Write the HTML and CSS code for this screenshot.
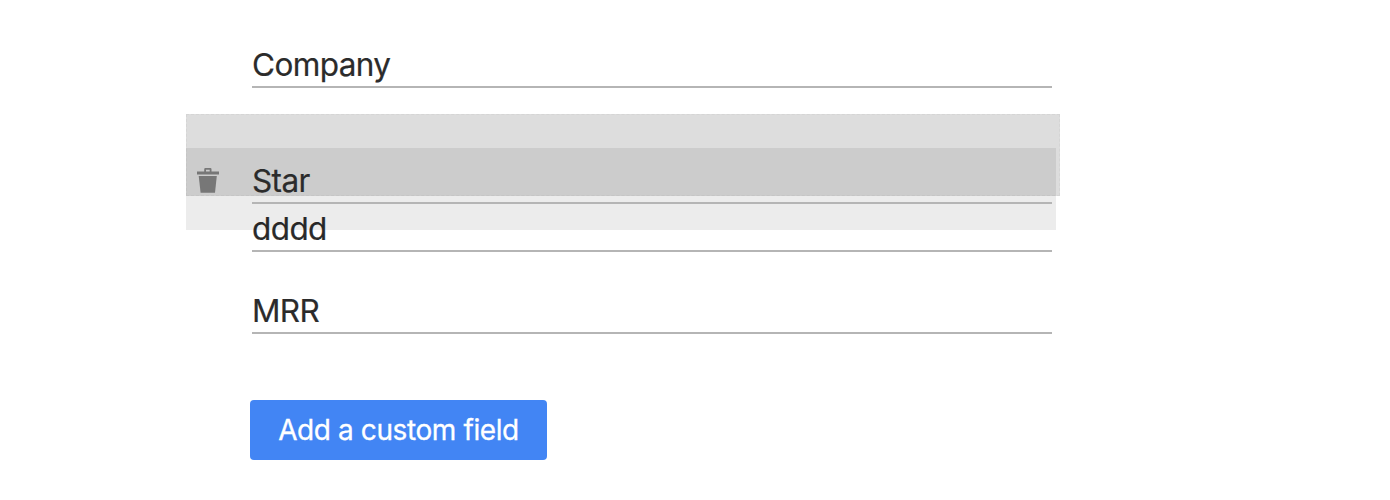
FILE: index.html
```html
<!DOCTYPE html>
<html lang="en">
<head>
  <meta charset="UTF-8" />
  <meta name="viewport" content="width=device-width, initial-scale=1.0"/>
  <title>Custom fields</title>
  <link rel="stylesheet" href="styles.css">
</head>
<body>

  <main class="custom-fields">
    <div class="field-row">
      <div class="field">Company</div>
    </div>

    <!-- Drop target, with the dragged row floating over it -->
    <div class="drop-target">
      <div class="field-row dragging">
        <svg class="trash" viewBox="0 0 22 25" width="22" height="25" aria-hidden="true">
          <path d="M0 3.5h7.2V1.2Q7.2 0 8.4 0h4.9q1.2 0 1.2 1.2v2.3H22v3H0zM9 3.5h3.7V1.8H9z" fill-rule="evenodd"/>
          <path d="M1.7 8h18.1L18 24.8H3.6z"/>
        </svg>
        <div class="field">Star</div>
      </div>
    </div>

    <div class="field-row">
      <div class="field">dddd</div>
    </div>

    <div class="field-row">
      <div class="field">MRR</div>
    </div>

    <button type="button" class="add-button">Add a custom field</button>
  </main>

</body>
</html>
```

FILE: styles.css
```css
body {
  margin: 0;
  background-color: white;
  color: #2b2b2b;
  font-family: Inter, "Liberation Sans", sans-serif;
}

.custom-fields {
  width: 874px;
  padding-top: 32px;
  margin-left: 186px;
}

.field-row {
  box-sizing: border-box;
  width: 870px;
  height: 82px;
  padding: 14px 4px 26px 66px;
}

.field {
  box-sizing: border-box;
  height: 42px;
  border-bottom: 2px solid #b5b5b5;
  font-size: 31.5px;
  line-height: 38px;
  letter-spacing: -0.6px;
  -webkit-text-stroke: 0.2px;
}

.drop-target {
  position: relative;
  box-sizing: border-box;
  height: 82px;
  background-color: #dddddd;
  border: 1px dashed #d5d5d5;
}

.dragging {
  position: absolute;
  top: 33px;
  left: -1px;
  background-color: rgba(0, 0, 0, 0.075);
}

.trash {
  position: absolute;
  top: 20px;
  left: 11px;
  fill: #777777;
}

.add-button {
  display: block;
  width: 297px;
  height: 60px;
  margin: 40px 0 0 64px;
  padding: 0;
  border: none;
  border-radius: 4px;
  background-color: #4285f4;
  color: white;
  font-family: inherit;
  font-size: 28px;
  letter-spacing: -0.4px;
  -webkit-text-stroke: 0.3px;
  cursor: pointer;
}
```
